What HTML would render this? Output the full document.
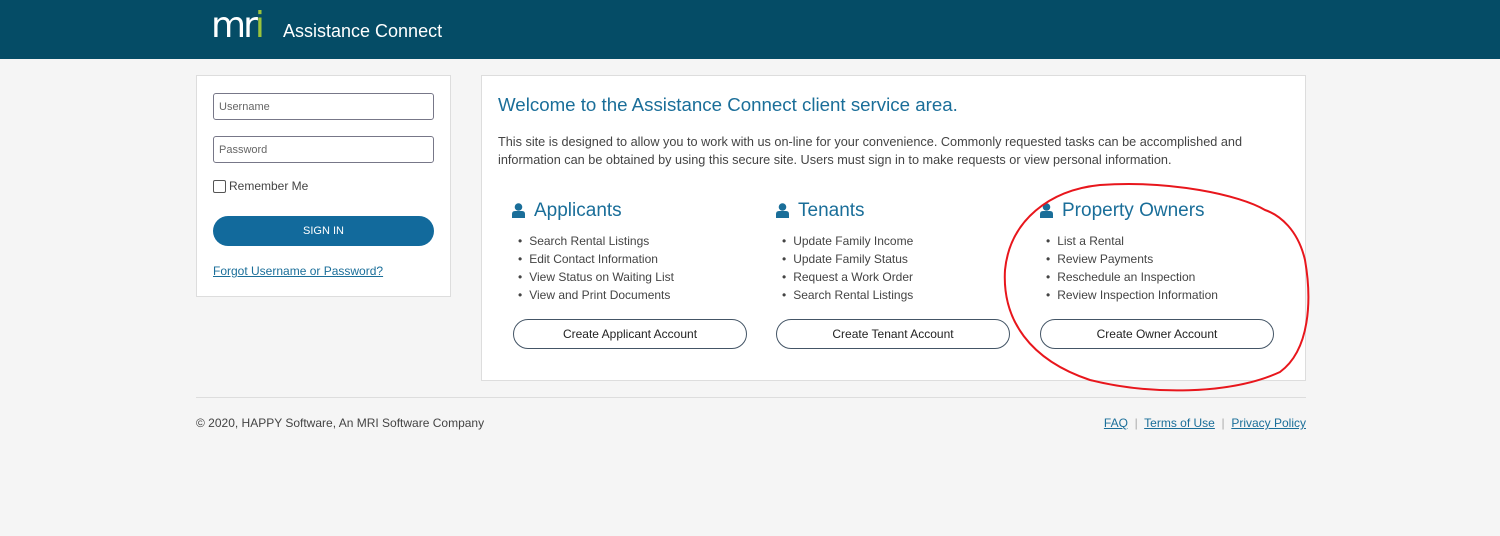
<!DOCTYPE html>
<html><head><meta charset="utf-8"><style>
*{box-sizing:border-box;margin:0;padding:0}
body{width:1500px;height:536px;background:#f5f5f5;font-family:"Liberation Sans",sans-serif;color:#444;font-size:12px;position:relative;overflow:hidden}
.hdr{height:59px;background:#054c66;position:relative}
.logo{position:absolute;left:211px;top:10px;font-size:36px;color:#fff;letter-spacing:-3px;line-height:32px;font-family:"DejaVu Sans",sans-serif}
.logo b{color:#9bc33c;font-weight:normal}
.ttl{position:absolute;left:283px;top:21px;color:#fff;font-size:18px}
.box{position:absolute;background:#fff;border:1px solid #ddd}
.inp{position:absolute;left:16px;width:221px;height:27px;border:1px solid #778;border-radius:3px;font-size:11px;color:#666;padding:7px 5px}
.btn{position:absolute;border:1px solid #456;border-radius:15px;height:30px;text-align:center;line-height:28px;font-size:12px;color:#222}
h1{position:absolute;left:16px;top:18px;font-size:18.7px;font-weight:normal;color:#1a6e99}
.col{position:absolute;top:124px;width:240px}
.col h2{font-size:19px;font-weight:normal;color:#1a6e99;margin-left:36px;margin-bottom:10px;position:relative}
.col h2 svg{position:absolute;left:-22px;top:3px}
.col ul{margin-left:21px;list-style:none}
.col li{line-height:18px;font-size:12px}
.col li:before{content:"•";margin-right:7px;margin-left:-1px}
a{color:#1a6e99;text-decoration:underline}
</style></head><body>
<div class="hdr"><div class="logo">mr<b>i</b></div><div class="ttl">Assistance Connect</div></div>
<div class="box" style="left:196px;top:75px;width:255px;height:222px">
<div class="inp" style="top:17px">Username</div>
<div class="inp" style="top:60px">Password</div>
<div style="position:absolute;left:16px;top:103px;font-size:12px"><span style="display:inline-block;width:13px;height:13px;border:1px solid #555;border-radius:2px;vertical-align:-3px;margin-right:3px"></span>Remember Me</div>
<div style="position:absolute;left:16px;top:140px;width:221px;height:30px;background:#126a9c;border-radius:15px;color:#fff;text-align:center;line-height:30px;font-size:11px">SIGN IN</div>
<a style="position:absolute;left:16px;top:188px;font-size:12px">Forgot Username or Password?</a>
</div>
<div class="box" style="left:481px;top:75px;width:825px;height:306px">
<h1>Welcome to the Assistance Connect client service area.</h1>
<p style="position:absolute;left:16px;top:57px;width:800px;line-height:18px;font-size:12.7px;white-space:nowrap">This site is designed to allow you to work with us on-line for your convenience. Commonly requested tasks can be accomplished and<br>information can be obtained by using this secure site. Users must sign in to make requests or view personal information.</p>
<div class="col" style="left:16px"><h2><svg width="13" height="15" viewBox="0 0 13 15"><circle cx="6.5" cy="4" r="3.8" fill="#1a6e99"/><path d="M0 15V11Q0 8 3 8H10Q13 8 13 11V15Z" fill="#1a6e99"/></svg>Applicants</h2><ul><li>Search Rental Listings</li><li>Edit Contact Information</li><li>View Status on Waiting List</li><li>View and Print Documents</li></ul></div>
<div class="col" style="left:280px"><h2><svg width="13" height="15" viewBox="0 0 13 15"><circle cx="6.5" cy="4" r="3.8" fill="#1a6e99"/><path d="M0 15V11Q0 8 3 8H10Q13 8 13 11V15Z" fill="#1a6e99"/></svg>Tenants</h2><ul><li>Update Family Income</li><li>Update Family Status</li><li>Request a Work Order</li><li>Search Rental Listings</li></ul></div>
<div class="col" style="left:544px"><h2><svg width="13" height="15" viewBox="0 0 13 15"><circle cx="6.5" cy="4" r="3.8" fill="#1a6e99"/><path d="M0 15V11Q0 8 3 8H10Q13 8 13 11V15Z" fill="#1a6e99"/></svg>Property Owners</h2><ul><li>List a Rental</li><li>Review Payments</li><li>Reschedule an Inspection</li><li>Review Inspection Information</li></ul></div>
<div class="btn" style="left:31px;top:243px;width:234px">Create Applicant Account</div>
<div class="btn" style="left:294px;top:243px;width:234px">Create Tenant Account</div>
<div class="btn" style="left:558px;top:243px;width:234px">Create Owner Account</div>
</div>
<div style="position:absolute;left:196px;top:397px;width:1110px;border-top:1px solid #ddd"></div>
<div style="position:absolute;left:196px;top:416px">© 2020, HAPPY Software, An MRI Software Company</div>
<div style="position:absolute;right:194px;top:416px;color:#aaa"><a>FAQ</a> &nbsp;|&nbsp; <a>Terms of Use</a> &nbsp;|&nbsp; <a>Privacy Policy</a></div>
<svg style="position:absolute;left:0;top:0" width="1500" height="536"><path d="M1100 185 C1050 190 1010 220 1005 270 C1002 320 1030 360 1090 380 C1150 395 1230 395 1280 372 C1310 350 1312 300 1305 260 C1298 230 1280 215 1265 210 C1240 195 1170 180 1100 185 Z" fill="none" stroke="#e8161c" stroke-width="2"/></svg>
</body></html>
